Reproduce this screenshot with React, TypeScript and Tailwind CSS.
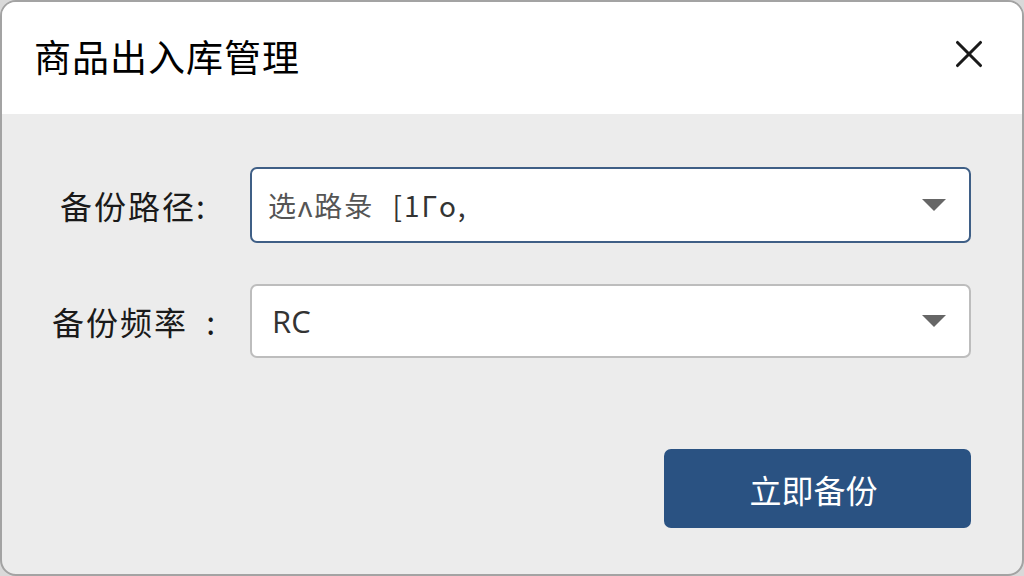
import React from 'react';
import { X } from 'lucide-react';

const font = { fontFamily: '"Noto Sans CJK SC", "Noto Sans", sans-serif' };

const Caret = () => (
  <svg width="26" height="14" viewBox="0 0 26 14" className="shrink-0">
    <polygon points="1,1 25,1 13,13" fill="#666666" />
  </svg>
);

const App: React.FC = () => {
  return (
    <div className="w-[1024px] h-[576px] bg-[#d9d9d9]" style={font}>
      <div className="w-full h-full rounded-[16px] border-2 border-[#a3a3a3] overflow-hidden flex flex-col bg-[#ececec]">
        {/* Header */}
        <div className="h-[112px] shrink-0 bg-white flex items-center justify-between pl-[32px] pr-[34px]">
          <h1 className="text-[37px] leading-none text-black tracking-[1px] mt-[-4px]">商品出入库管理</h1>
          <button className="text-[#1a1a1a] mt-[-8px] mr-[-4px]">
            <X size={46} strokeWidth={1.6} />
          </button>
        </div>

        {/* Body */}
        <div className="flex-1 flex flex-col pl-[48px] pr-[51px] pt-[53px]">
          <div className="flex items-center">
            <label className="w-[200px] pl-[10px] text-[32px] text-[#1a1a1a] leading-none tracking-[2px]">备份路径:</label>
            <div className="flex-1 h-[76px] bg-white border-2 border-[#3f5f86] rounded-[7px] flex items-center justify-between pl-[16px] pr-[22px]">
              <span className="text-[28px] text-[#555] leading-none tracking-[2px]">选ʌ路彔 <span className="text-[#333] ml-[10px]">[1Γo,</span></span>
              <Caret />
            </div>
          </div>

          <div className="flex items-center mt-[41px]">
            <label className="w-[200px] pl-[2px] text-[32px] text-[#1a1a1a] leading-none tracking-[2px] whitespace-pre">备份频率  :</label>
            <div className="flex-1 h-[74px] bg-white border-2 border-[#bdbdbd] rounded-[7px] flex items-center justify-between pl-[20px] pr-[22px]">
              <span className="text-[31px] text-[#333] leading-none" style={{ fontFamily: '"Open Sans", "Noto Sans", sans-serif' }}>RC</span>
              <Caret />
            </div>
          </div>

          <div className="flex justify-end mt-[91px]">
            <button className="w-[307px] h-[79px] bg-[#2a5282] rounded-[7px] text-white text-[32px] leading-none pr-[8px]">
              立即备份
            </button>
          </div>
        </div>
      </div>
    </div>
  );
};

export default App;
